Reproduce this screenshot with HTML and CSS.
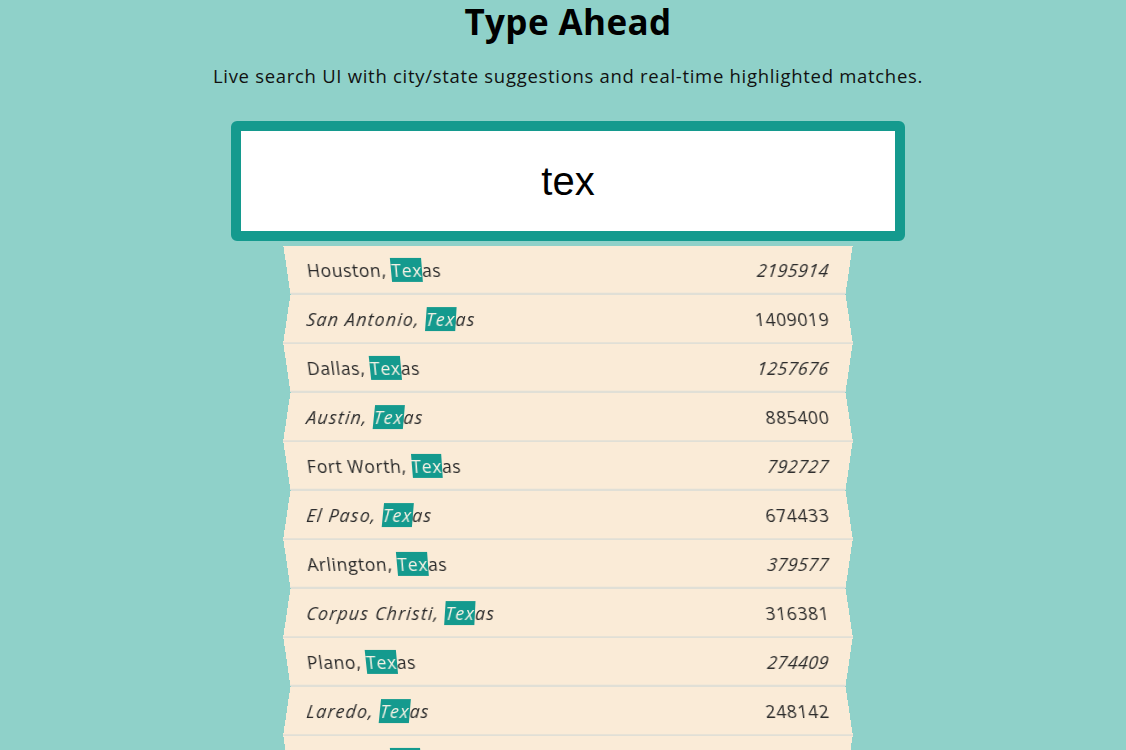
FILE: index.html
```html
<!DOCTYPE html>
<html lang="en">
<head>
<meta charset="utf-8">
<title>Type Ahead</title>
<link rel="stylesheet" href="styles.css">
</head>
<body>
<header class="intro">
  <h1 class="title">Type Ahead</h1>
  <p class="subtitle">Live search UI with city/state suggestions and real-time highlighted matches.</p>
</header>
<form class="search-form">
  <input type="text" class="search" value="tex" aria-label="City or state">
  <ul class="suggestions">
    <li><span class="name">Houston, <span class="hl">Tex</span>as</span><span class="population">2195914</span></li>
    <li><span class="name">San Antonio, <span class="hl">Tex</span>as</span><span class="population">1409019</span></li>
    <li><span class="name">Dallas, <span class="hl">Tex</span>as</span><span class="population">1257676</span></li>
    <li><span class="name">Austin, <span class="hl">Tex</span>as</span><span class="population">885400</span></li>
    <li><span class="name">Fort Worth, <span class="hl">Tex</span>as</span><span class="population">792727</span></li>
    <li><span class="name">El Paso, <span class="hl">Tex</span>as</span><span class="population">674433</span></li>
    <li><span class="name">Arlington, <span class="hl">Tex</span>as</span><span class="population">379577</span></li>
    <li><span class="name">Corpus Christi, <span class="hl">Tex</span>as</span><span class="population">316381</span></li>
    <li><span class="name">Plano, <span class="hl">Tex</span>as</span><span class="population">274409</span></li>
    <li><span class="name">Laredo, <span class="hl">Tex</span>as</span><span class="population">248142</span></li>
    <li><span class="name">Lubbock, <span class="hl">Tex</span>as</span><span class="population">239538</span></li>
    <li><span class="name">Garland, <span class="hl">Tex</span>as</span><span class="population">234566</span></li>
  </ul>
</form>
</body>
</html>
```

FILE: styles.css
```css
*, *::before, *::after {
  box-sizing: border-box;
}

html {
  background: #8fd1c9;
}

body {
  margin: 0;
  padding: 0 0 0 10px;
  font-family: "Open Sans", "Liberation Sans", sans-serif;
  color: #222;
}

.intro {
  text-align: center;
}

.title {
  margin: 0;
  font-size: 35px;
  line-height: 44px;
  letter-spacing: 0.4px;
  font-weight: 700;
  color: #000;
}

.subtitle {
  margin: 20px 0 0;
  font-size: 18.5px;
  line-height: 24px;
  letter-spacing: 0.7px;
  color: #111;
}

.search-form {
  width: 562px;
  margin: 33px auto 0;
}

.search {
  display: block;
  width: 120%;
  height: 120px;
  margin: 0 0 0 -10%;
  padding: 0 20px;
  border: 10px solid #149a8e;
  border-radius: 6px;
  outline: 0;
  background: #fff;
  text-align: center;
  font-family: "Liberation Sans", Arial, sans-serif;
  font-size: 40px;
  color: #000;
}

.suggestions {
  margin: 5px 0 0;
  padding: 0;
  list-style: none;
}

.suggestions li {
  display: flex;
  justify-content: space-between;
  align-items: center;
  height: 49px;
  padding: 0 20px;
  background: #faebd7;
  border-bottom: 2px solid #e0dfd6;
  font-size: 17.5px;
  letter-spacing: 0.6px;
  color: #2a2a2a;
}

.suggestions li:nth-child(odd) {
  transform: perspective(100px) rotateX(-3deg);
}

.suggestions li:nth-child(even) {
  transform: perspective(100px) rotateX(3deg) scale(1.001);
}

.suggestions li:nth-child(odd) .population,
.suggestions li:nth-child(even) .name {
  font-style: italic;
}

.suggestions li:nth-child(even) .name {
  letter-spacing: 1.3px;
}

.hl {
  background: #149a8e;
  color: #f4f1e4;
}
```
